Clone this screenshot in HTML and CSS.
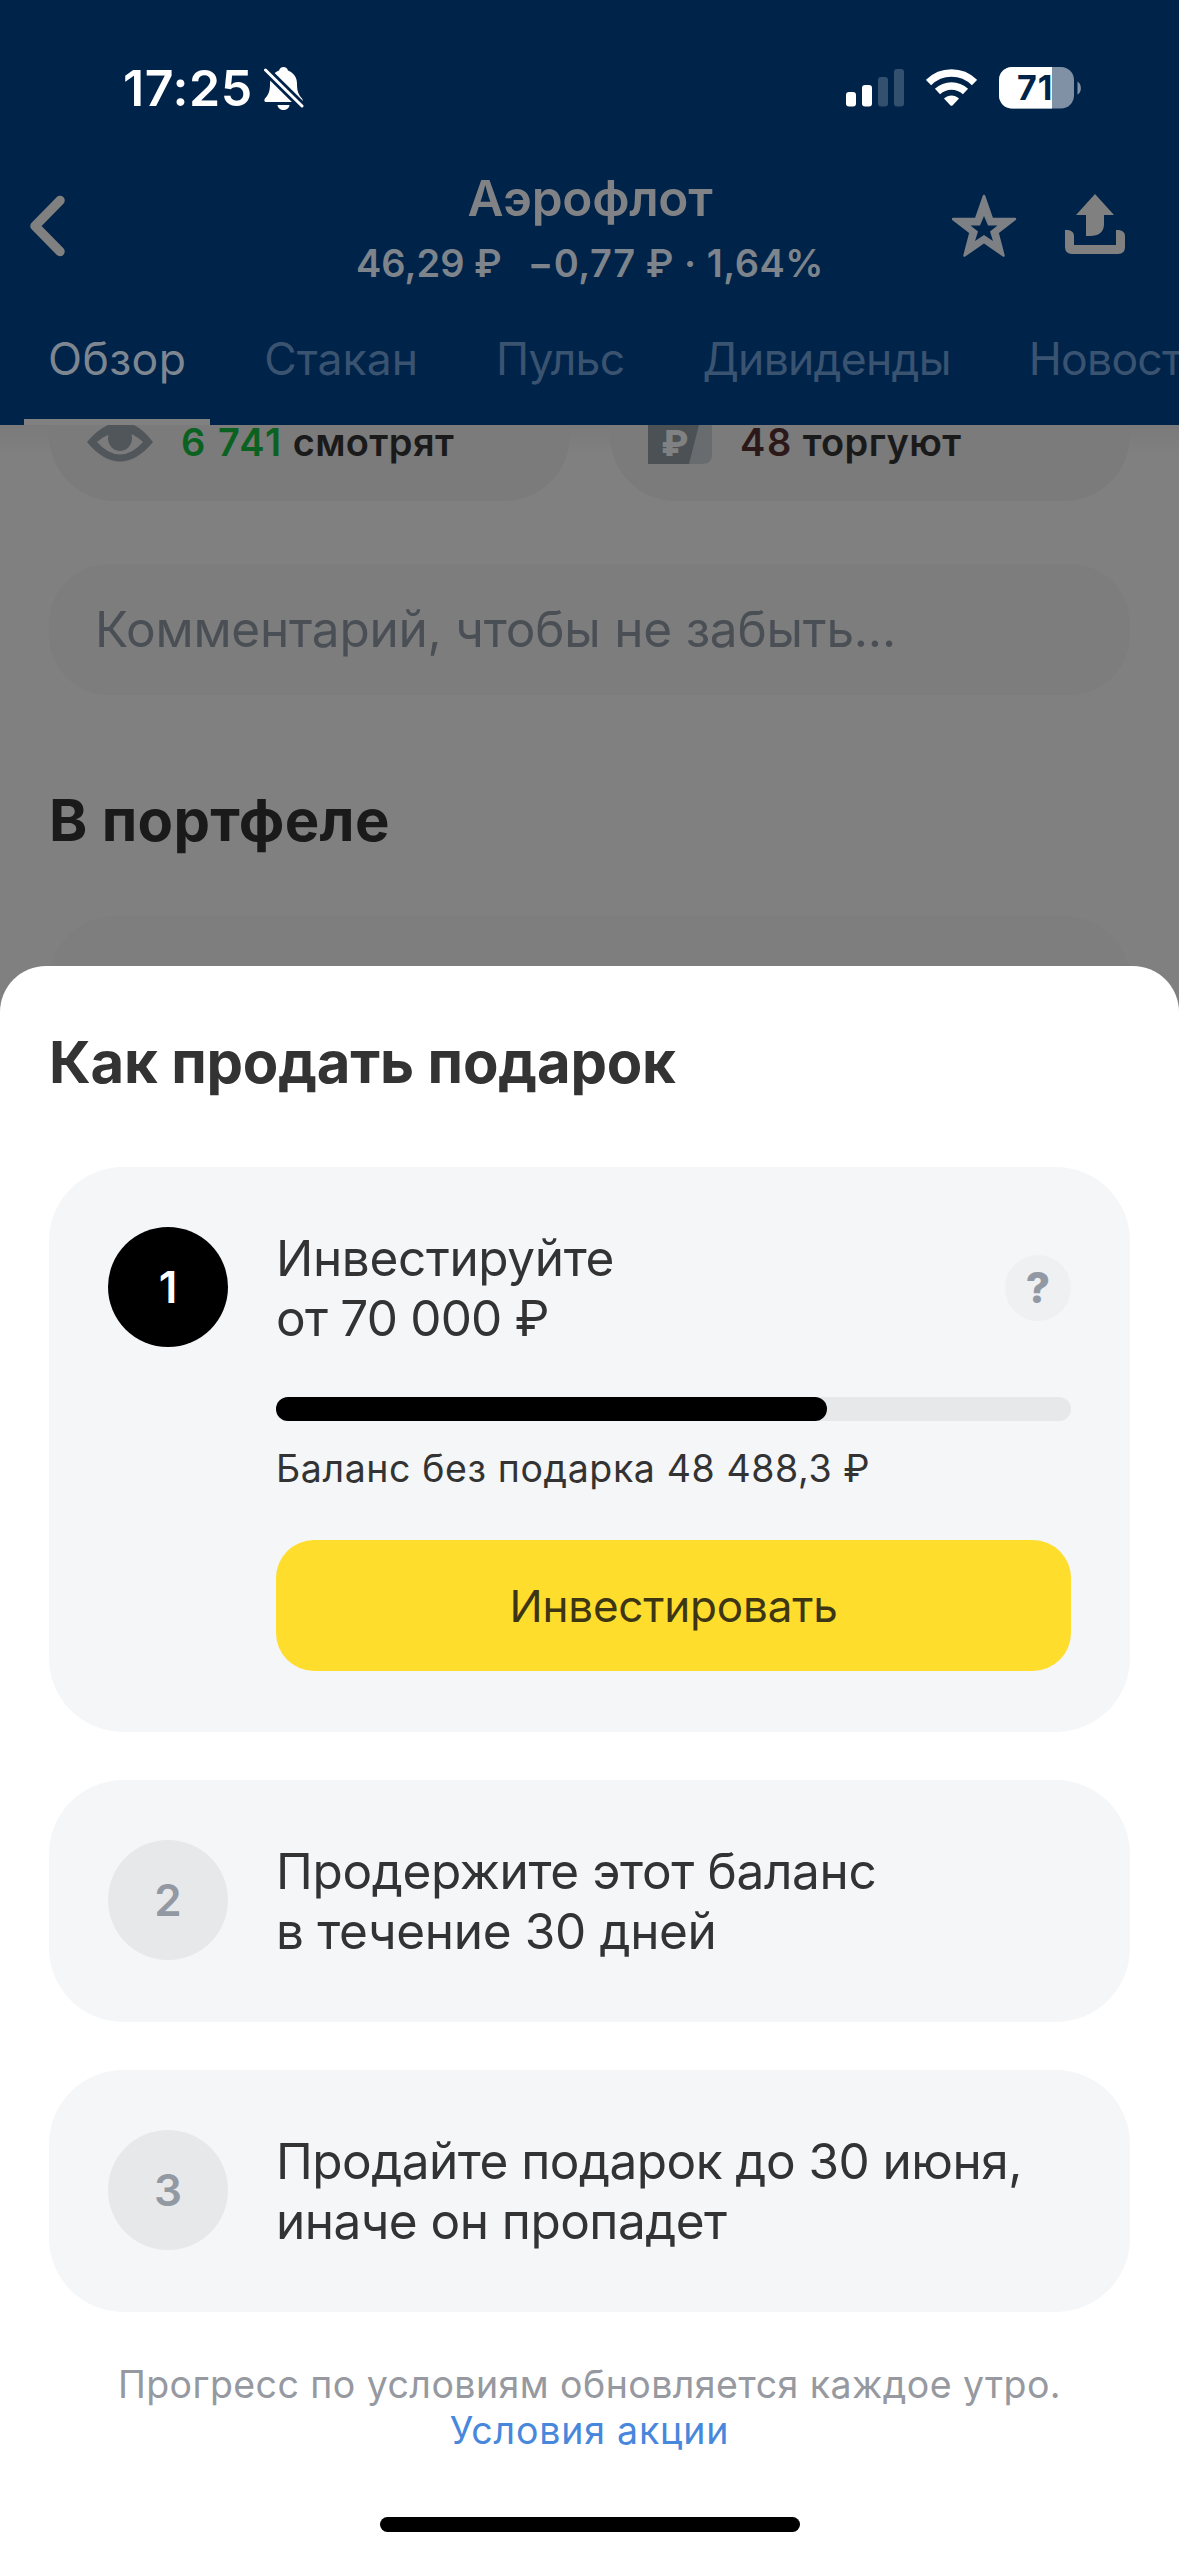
FILE: index.html
```html
<!DOCTYPE html>
<html lang="ru">
<head>
<meta charset="utf-8">
<title>Аэрофлот</title>
<link rel="stylesheet" href="styles.css">
</head>
<body>
<div class="screen">
  <header class="header">
    <div class="status">
      <div class="status__left">
        <span class="status__time">17:25</span>
        <svg class="status__bell" width="40" height="44" viewBox="0 0 40 44">
          <defs>
            <mask id="slash"><rect width="40" height="44" fill="#fff"/><path d="M0 2.5L39 41" stroke="#000" stroke-width="8.5"/></mask>
          </defs>
          <g mask="url(#slash)" fill="#fff">
            <path d="M15 4.5C16 1.5 17.500 1 19.500 1s3.500.5 4.500 3.500C30 7 33 11.500 33 18c0 8 2 11 5 14.500C39.500 34.500 39 36 36.500 36H2.500C0 36 0 34 1 32.500 4 29 6 26 6 18 6 11.500 9 7 15 4.500z"/>
            <path d="M13.500 39h12c-.5 3.500-3 5-6 5s-5.500-1.500-6-5z"/>
          </g>
          <path d="M1.500 4L38 40" stroke="#fff" stroke-width="3" stroke-linecap="round"/>
        </svg>
      </div>
      <div class="status__right">
        <svg width="58" height="38" viewBox="0 0 58 38" fill="#fff">
          <rect x="0" y="23" width="10" height="14.500" rx="3"/>
          <rect x="16" y="16" width="10" height="21.500" rx="3"/>
          <rect x="32" y="8" width="10" height="29.500" rx="3" fill="#34506f"/>
          <rect x="48" y="0" width="10" height="37.500" rx="3" fill="#34506f"/>
        </svg>
        <svg width="51" height="38" viewBox="0 0 51 38">
          <g fill="none" stroke="#fff" stroke-width="7.500">
            <path d="M2.500 13.500C15.500 .8 35.500 .8 48.500 13.500"/>
            <path d="M11.500 22.500C19.500 15 31.500 15 39.500 22.500"/>
          </g>
          <path d="M18 29.500C22.500 25.500 28.500 25.500 33 29.500L26.700 36.200Q25.500 37.400 24.300 36.200Z" fill="#fff"/>
        </svg>
        <svg width="83" height="42" viewBox="0 0 83 42">
          <defs><clipPath id="level"><rect width="53" height="42"/></clipPath></defs>
          <rect width="75" height="41.500" rx="13" fill="#8091a5"/>
          <rect width="75" height="41.500" rx="13" fill="#fff" clip-path="url(#level)"/>
          <path d="M78.500 14.500C83 17 83 25.500 78.500 27.500z" fill="#8091a5"/>
          <text class="battery-text" x="18" y="33">71</text>
        </svg>
      </div>
    </div>

    <div class="nav">
      <svg class="nav__back" width="36" height="62" viewBox="0 0 36 62">
        <path d="M30 5.500L5 31L30 56.500" fill="none" stroke="#808080" stroke-width="9.500" stroke-linecap="round" stroke-linejoin="round"/>
      </svg>
      <div class="nav__center">
        <div class="nav__title">Аэрофлот</div>
        <div class="nav__price"><span>46,29&nbsp;₽</span><span class="nav__change">−0,77&nbsp;₽ · 1,64%</span></div>
      </div>
      <div class="nav__actions">
        <svg width="66" height="64" viewBox="0 0 66 64">
          <path fill="#7d8084" stroke="#7d8084" stroke-width="2.500" stroke-linejoin="round" d="M32 2L40 25H63L45.500 38.500L51.500 61.500L32 48L12.500 61.500L18.500 38.500L1 25H24Z"/>
          <path fill="#002349" d="M32 22L36 31.500H45.500L38 37.500L41 47L32 41L23 47L26 37.500L18.500 31.500H28Z"/>
        </svg>
        <svg width="60" height="60" viewBox="0 0 60 60" fill="#808080">
          <path d="M30 0L49 21H39V31Q38 42 25 42H21V21H11Z"/>
          <path d="M0 36H3Q9 37 9 42V51H51V36H54Q60 37 60 42V53Q60 60 53 60H7Q0 60 0 53Z"/>
        </svg>
      </div>
    </div>

    <nav class="tabs">
      <span class="tab tab--active">Обзор</span>
      <span class="tab">Стакан</span>
      <span class="tab tab--narrow">Пульс</span>
      <span class="tab tab--narrow">Дивиденды</span>
      <span class="tab tab--narrow">Новости</span>
    </nav>
  </header>

  <main class="content">
    <div class="stats">
      <div class="stat">
        <svg class="stat__eye" width="66" height="38" viewBox="0 -2 66 38">
          <path fill="#51565b" d="M0 15Q16-4 33-5T66 15Q50 34.500 33 34.500T0 15Z"/>
          <path fill="#7b7b7c" d="M10 15Q21 5.500 33 5T56 15Q45 27.500 33 27.500T10 15Z"/>
          <ellipse cx="33" cy="11" rx="12" ry="13" fill="#51565b"/>
        </svg>
        <div class="stat__text"><span class="stat__num stat__num--up">6 741</span> смотрят</div>
      </div>
      <div class="stat">
        <svg class="stat__ruble" width="64" height="39" viewBox="0 0 64 39">
          <path fill="#696c6f" d="M0 0H64V30Q64 39 54 39H0Z"/>
          <path fill="#4c5156" d="M0 0H51L41 39H0Z"/>
          <text class="ruble-text" x="13" y="31">₽</text>
        </svg>
        <div class="stat__text"><span class="stat__num stat__num--down">48</span> торгуют</div>
      </div>
    </div>
    <div class="note">Комментарий, чтобы не забыть...</div>
    <h2 class="section-title">В портфеле</h2>
    <div class="holding"></div>
  </main>

  <section class="sheet">
    <h1 class="sheet__title">Как продать подарок</h1>
    <div class="steps">
      <article class="step">
        <div class="step__num step__num--active">1</div>
        <div class="step__body">
          <div class="step__head">
            <div class="step__text">Инвестируйте<br><span class="step__sum">от 70 000 ₽</span></div>
            <div class="help">?</div>
          </div>
          <div class="progress"><div class="progress__fill" style="width:69.3%"></div></div>
          <div class="balance">Баланс без подарка 48 488,3 ₽</div>
          <button class="button">Инвестировать</button>
        </div>
      </article>
      <article class="step">
        <div class="step__num">2</div>
        <div class="step__body"><div class="step__text">Продержите этот баланс<br>в течение 30 дней</div></div>
      </article>
      <article class="step">
        <div class="step__num">3</div>
        <div class="step__body"><div class="step__text step__text--narrow">Продайте подарок до 30 июня,<br>иначе он пропадет</div></div>
      </article>
    </div>
    <footer class="footer">
      <div>Прогресс по условиям обновляется каждое утро.</div>
      <a class="footer__link">Условия акции</a>
    </footer>
    <div class="home-bar"></div>
  </section>
</div>
</body>
</html>
```
FILE: styles.css
```css
* { box-sizing: border-box; }
body {
  margin: 0;
  background: #808080;
  font-family: Inter, "Liberation Sans", sans-serif;
  color: #333;
}
svg { display: block; flex: none; overflow: hidden; }
.screen {
  position: relative;
  width: 1179px;
  height: 2556px;
  overflow: hidden;
  background: #808080;
}

/* Header */
.header { height: 425px; background: #002349; }
.status {
  display: flex;
  justify-content: space-between;
  align-items: center;
  height: 176px;
  padding: 0 97px 0 123px;
}
.status__left { display: flex; align-items: center; gap: 11px; }
.status__time { font-size: 50px; font-weight: 600; letter-spacing: .6px; color: #fff; }
.status__right { display: flex; align-items: center; gap: 22px; }
.battery-text { font-size: 34px; font-weight: 700; letter-spacing: 1px; fill: #002349; }
.nav {
  display: grid;
  grid-template-columns: 1fr auto 1fr;
  align-items: start;
  height: 109px;
  padding: 0 54px 0 30px;
}
.nav__back { margin-top: 19px; }
.nav__center { margin-left: 25px; text-align: center; white-space: nowrap; color: #808285; }
.nav__title { font-size: 49.5px; font-weight: 600; line-height: 44px; letter-spacing: -.3px; }
.nav__price { margin-top: 21px; font-size: 38px; font-weight: 600; line-height: 44px; color: #7e848b; }
.nav__change { margin-left: 26px; letter-spacing: .5px; }
.nav__actions { display: flex; justify-content: flex-end; gap: 47px; padding-top: 18px; }
.tabs { display: flex; gap: 30px; padding: 18px 0 0 24px; overflow: hidden; }
.tab {
  flex: none;
  padding: 0 24px 4px;
  border-bottom: 6px solid transparent;
  font-size: 44.5px;
  line-height: 112px;
  color: #3a5370;
}
.tab--active { border-color: #808080; color: #7e8791; letter-spacing: .4px; }
.tab--narrow { letter-spacing: -.75px; }

/* Dimmed page content */
.content {
  height: 560px;
  padding: 0 49px;
  background: linear-gradient(#7b7a7a, #808080 30px);
}
.stats { display: grid; grid-template-columns: 521px 520px; gap: 40px; height: 76px; }
.stat {
  display: flex;
  align-items: flex-start;
  background: #7b7b7c;
  border-radius: 0 0 66px 66px;
}
.stat__eye, .stat__ruble { margin-left: 38px; }
.stat__text {
  margin-left: 28px;
  font-size: 38px;
  font-weight: 600;
  line-height: 35px;
  letter-spacing: .35px;
  color: #1a1a1b;
  white-space: nowrap;
}
.stat__num { letter-spacing: 1.6px; }
.stat__num--up { color: #0b611f; }
.stat__num--down { color: #2c1719; }
.ruble-text { font-size: 36px; font-weight: 800; fill: #808182; }
.note {
  height: 131px;
  margin-top: 63px;
  padding-left: 46px;
  border-radius: 60px;
  background: #7d7d7d;
  font-size: 49.5px;
  line-height: 131px;
  letter-spacing: -.22px;
  color: #4a4f55;
}
.section-title {
  margin: 90px 0 61px;
  font-size: 58px;
  font-weight: 700;
  line-height: 70px;
  letter-spacing: .3px;
  color: #1a1a1a;
}
.holding { height: 90px; border-radius: 66px 66px 0 0; background: #7e7e7e; }

/* Bottom sheet, laid over the page */
.sheet {
  position: absolute;
  inset: 966px 0 0;
  padding: 61px 49px 0;
  border-radius: 46px 46px 0 0;
  background: #fff;
}
.sheet__title { margin: 0 0 70px; font-size: 58px; font-weight: 700; line-height: 70px; letter-spacing: -.2px; color: #333; }
.steps { display: flex; flex-direction: column; gap: 48px; }
.step {
  display: flex;
  gap: 48px;
  padding: 60px 59px 61px;
  border-radius: 74px;
  background: #f5f6f8;
}
.step__num {
  flex: none;
  width: 120px;
  height: 120px;
  border-radius: 50%;
  background: #e7e8ea;
  font-size: 44px;
  font-weight: 600;
  line-height: 120px;
  text-align: center;
  color: #9299a2;
}
.step__num--active { background: #000; color: #fff; }
.step__body { flex: 1; padding-top: 1px; }
.step__head { display: flex; justify-content: space-between; align-items: center; }
.step__text { font-size: 49.5px; line-height: 60px; letter-spacing: -.35px; white-space: nowrap; }
.step__text--narrow { letter-spacing: -.53px; }
.step__sum { letter-spacing: -.8px; }
.help {
  width: 66px;
  height: 66px;
  border-radius: 50%;
  background: #eff0f1;
  font-size: 42px;
  font-weight: 800;
  line-height: 65px;
  text-align: center;
  color: #9299a5;
}
.progress { height: 24px; margin-top: 49px; border-radius: 12px; background: #e7e8ea; }
.progress__fill { height: 24px; border-radius: 12px; background: #000; }
.balance { margin-top: 25px; font-size: 37.5px; line-height: 46px; letter-spacing: .6px; }
.button {
  display: block;
  width: 100%;
  height: 131px;
  margin-top: 48px;
  padding: 0;
  border: 0;
  border-radius: 38px;
  background: #ffdd2d;
  font: 400 44px Inter, "Liberation Sans", sans-serif;
  letter-spacing: -.2px;
  color: #3d3614;
}
.footer {
  margin-top: 50px;
  font-size: 37.5px;
  line-height: 46px;
  letter-spacing: .44px;
  text-align: center;
  color: #9699a0;
}
.footer__link { letter-spacing: .8px; color: #4787dc; }
.home-bar { width: 420px; height: 15px; margin: 63px auto 0; border-radius: 8px; background: #000; }
```
